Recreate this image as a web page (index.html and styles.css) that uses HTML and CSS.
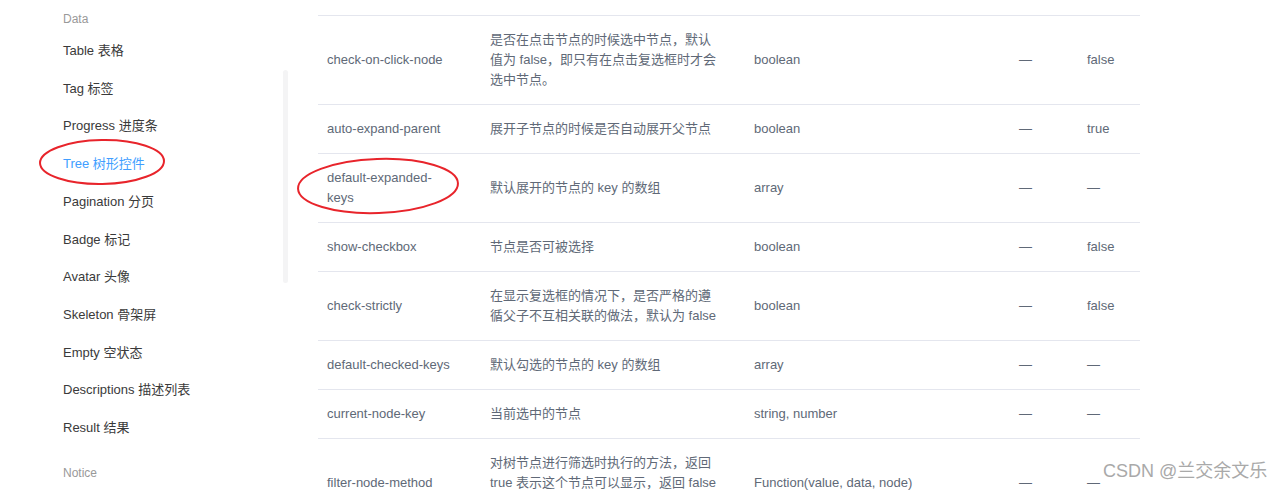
FILE: index.html
```html
<!DOCTYPE html>
<html lang="zh-CN">
<head>
<meta charset="utf-8">
<title>Tree 树形控件</title>
<link rel="stylesheet" href="styles.css">
</head>
<body>
<div class="page">
  <aside class="sidebar">
    <nav class="nav">
      <div class="group-title">Data</div>
      <ul class="nav-list">
        <li class="nav-item">Table 表格</li>
        <li class="nav-item">Tag 标签</li>
        <li class="nav-item">Progress 进度条</li>
        <li class="nav-item active">Tree 树形控件</li>
        <li class="nav-item">Pagination 分页</li>
        <li class="nav-item">Badge 标记</li>
        <li class="nav-item">Avatar 头像</li>
        <li class="nav-item">Skeleton 骨架屏</li>
        <li class="nav-item">Empty 空状态</li>
        <li class="nav-item">Descriptions 描述列表</li>
        <li class="nav-item">Result 结果</li>
      </ul>
      <div class="group-title notice">Notice</div>
    </nav>
    <div class="scroll-thumb"></div>
  </aside>
  <main class="main">
    <table class="attr-table">
      <colgroup>
        <col class="c1"><col class="c2"><col class="c3"><col class="c4"><col class="c5">
      </colgroup>
      <tbody>
        <tr>
          <td>check-on-click-node</td>
          <td>是否在点击节点的时候选中节点，默认值为 false，即只有在点击复选框时才会选中节点。</td>
          <td>boolean</td>
          <td>—</td>
          <td>false</td>
        </tr>
        <tr>
          <td>auto-expand-parent</td>
          <td>展开子节点的时候是否自动展开父节点</td>
          <td>boolean</td>
          <td>—</td>
          <td>true</td>
        </tr>
        <tr>
          <td>default-expanded-keys</td>
          <td>默认展开的节点的 key 的数组</td>
          <td>array</td>
          <td>—</td>
          <td>—</td>
        </tr>
        <tr>
          <td>show-checkbox</td>
          <td>节点是否可被选择</td>
          <td>boolean</td>
          <td>—</td>
          <td>false</td>
        </tr>
        <tr>
          <td>check-strictly</td>
          <td>在显示复选框的情况下，是否严格的遵循父子不互相关联的做法，默认为 false</td>
          <td>boolean</td>
          <td>—</td>
          <td>false</td>
        </tr>
        <tr>
          <td>default-checked-keys</td>
          <td>默认勾选的节点的 key 的数组</td>
          <td>array</td>
          <td>—</td>
          <td>—</td>
        </tr>
        <tr>
          <td>current-node-key</td>
          <td>当前选中的节点</td>
          <td>string, number</td>
          <td>—</td>
          <td>—</td>
        </tr>
        <tr>
          <td>filter-node-method</td>
          <td>对树节点进行筛选时执行的方法，返回 true 表示这个节点可以显示，返回 false 则表示这个节点会被隐藏</td>
          <td>Function(value, data, node)</td>
          <td>—</td>
          <td>—</td>
        </tr>
      </tbody>
    </table>
  </main>
</div>
<svg class="marks" width="1280" height="490" viewBox="0 0 1280 490" aria-hidden="true">
  <ellipse cx="102" cy="162" rx="62" ry="22" transform="rotate(-1 102 162)"/>
  <ellipse cx="378" cy="186" rx="80" ry="27" transform="rotate(-2 378 186)"/>
</svg>
<div class="watermark">CSDN @兰交余文乐</div>
</body>
</html>
```
FILE: styles.css
```css
html, body {
  margin: 0;
  padding: 0;
  background: #fff;
  overflow: hidden;
}
body {
  width: 1280px;
  height: 490px;
  position: relative;
  font-family: "Liberation Sans", Arial, "Noto Sans CJK SC", sans-serif;
}
.page {
  display: flex;
  align-items: flex-start;
}
.sidebar {
  width: 290px;
  flex: 0 0 290px;
  display: flex;
  align-items: flex-start;
}
.nav {
  flex: 1;
  padding-left: 63px;
  padding-top: 9px;
}
.group-title {
  font-size: 12px;
  line-height: 20px;
  color: #999;
  margin-bottom: 3px;
}
.group-title.notice {
  margin-top: 16px;
}
.nav-list {
  list-style: none;
  margin: 0;
  padding: 0;
}
.nav-item {
  font-size: 13px;
  line-height: 37.7px;
  color: #3a3a3a;
  white-space: nowrap;
}
.nav-item.active {
  color: #409eff;
}
.scroll-thumb {
  width: 5px;
  height: 213px;
  margin-top: 70px;
  margin-right: 2px;
  background: #f4f4f5;
  border-radius: 3px;
}
.main {
  padding-left: 28px;
  padding-top: 15px;
}
.attr-table {
  width: 822px;
  table-layout: fixed;
  border-collapse: collapse;
  border-top: 1px solid #e4e6ee;
  font-size: 13px;
  line-height: 20px;
  color: #606977;
}
.c1 { width: 158px; }
.c2 { width: 264px; }
.c3 { width: 265px; }
.c4 { width: 68px; }
.c5 { width: 67px; }
.attr-table td {
  padding: 14px 12px 14px 14px;
  border-bottom: 1px solid #e4e6ee;
  vertical-align: middle;
  text-align: left;
  word-wrap: break-word;
}
.attr-table td:nth-child(1) {
  padding-left: 9px;
  padding-right: 22px;
}
.attr-table td:nth-child(2) {
  padding-right: 18px;
}
.marks {
  position: absolute;
  left: 0;
  top: 0;
  pointer-events: none;
}
.marks ellipse {
  fill: none;
  stroke: #e8242b;
  stroke-width: 2;
}
.watermark {
  position: absolute;
  left: 1103px;
  top: 459px;
  font-size: 18px;
  line-height: 24px;
  color: #a9a9a9;
  white-space: nowrap;
  text-shadow: 0 0 2px #fff;
}
```
